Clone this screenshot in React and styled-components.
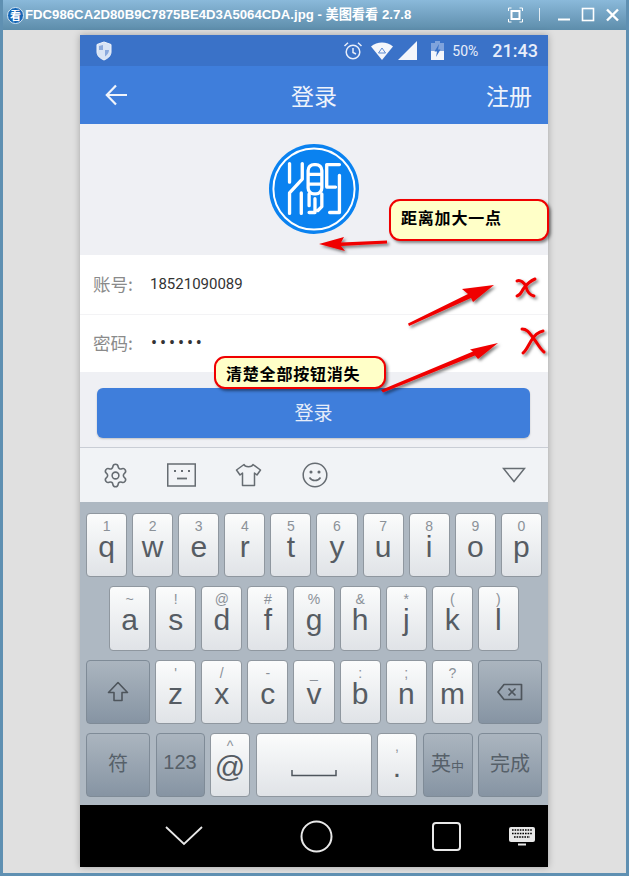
import React from 'react'
import styled, { createGlobalStyle } from 'styled-components'
import { Settings } from 'lucide-react'

const GlobalStyle = createGlobalStyle`
	html, body {
		margin: 0;
		padding: 0;
		background: #e0e0e0;
	}
	body {
		font-family: "Liberation Sans", "Noto Sans CJK SC", sans-serif;
	}
`

const Win = styled.div`
	position: relative;
	width: 629px;
	height: 876px;
	overflow: hidden;
	display: flex;
	flex-direction: column;
	box-sizing: border-box;
	border: solid #5f90b2;
	border-width: 0 3px 3px 3px;
	background: #e0e0e0;
`
const TitleBar = styled.div`
	height: 30px;
	margin: 0 -3px;
	padding: 0 0 0 7px;
	flex: none;
	display: flex;
	align-items: center;
	background: linear-gradient(#8ab9da, #5d8dab);
`
const AppIcon = styled.span`
	width: 17px;
	height: 17px;
	margin-right: 1px;
	border-radius: 50%;
	border: 1px solid #d5e6f2;
	box-sizing: border-box;
	background: #1565b5;
	color: #fff;
	font: 700 11px/15px "Noto Sans CJK SC", sans-serif;
	text-align: center;
`
const TitleText = styled.span`
	color: #fff;
	font: 700 13.2px/30px "Liberation Sans", "Noto Sans CJK SC", sans-serif;
	white-space: nowrap;
	flex: 1;
`
const WinButtons = styled.div`
	display: flex;
	align-items: center;
	width: 122px;
`
const Stage = styled.div`
	flex: 1;
	padding: 5px 78px 6px 77px;
	min-height: 0;
`
const Phone = styled.div`
	width: 468px;
	height: 832px;
	display: flex;
	flex-direction: column;
	box-shadow: 0 0 7px rgba(0, 0, 0, 0.28);
	background: #eff0f4;
`
const StatusBar = styled.div`
	height: 31px;
	flex: none;
	background: #3a72c8;
	display: flex;
	align-items: center;
	padding: 0 10px 0 15px;
	color: #e8eefa;
	font-family: Roboto, sans-serif;
`
const StatusIcons = styled.div`
	margin-left: auto;
	display: flex;
	align-items: center;
`
const StatusGap = styled.span`
	width: ${({$w}) => $w}px;
`
const Percent = styled.span`
	font-size: 14px;
	margin: 0 14px 0 8px;
`
const Clock = styled.span`
	font-size: 18px;
	font-weight: 500;
`
const AppBar = styled.div`
	height: 58px;
	flex: none;
	background: #3f7edb;
	display: flex;
	align-items: center;
	justify-content: space-between;
	padding: 0 16px 0 25px;
	color: #eef3fb;
	font: 400 23px "Noto Sans CJK SC", sans-serif;
`
const BarTitle = styled.span`
	margin-left: 13px;
`
const LogoArea = styled.div`
	height: 131px;
	flex: none;
	display: flex;
	justify-content: center;
	padding-top: 20px;
	box-sizing: border-box;
`
const Form = styled.div`
	flex: none;
	background: #fff;
`
const Row = styled.div`
	height: ${({$h}) => $h}px;
	display: flex;
	align-items: center;
	padding: 0 0 2px 13px;
	box-sizing: border-box;
	border-top: ${({$line}) => $line ? '1px solid #f3f3f5' : 'none'};
`
const Label = styled.span`
	width: 57px;
	color: #8a8a8a;
	font: 400 17.5px "Noto Sans CJK SC", sans-serif;
`
const Value = styled.span`
	color: #333;
	font: 400 15px Roboto, sans-serif;
`
const Dots = styled.span`
	color: #333;
	font: 400 18px Roboto, sans-serif;
	letter-spacing: 2.9px;
	margin-left: 1px;
`
const ButtonArea = styled.div`
	height: 76px;
	flex: none;
	padding: 16px 18px 0 17px;
	box-sizing: border-box;
	border-bottom: 1px solid #c9cdd5;
`
const Submit = styled.div`
	height: 50px;
	border-radius: 6px;
	background: #3f7edb;
	box-shadow: 0 1px 2px rgba(0, 0, 0, 0.2);
	color: #e6edf9;
	font: 400 19px/48px "Noto Sans CJK SC", sans-serif;
	text-align: center;
`
const ImeBar = styled.div`
	height: 54px;
	flex: none;
	background: #f1f3f6;
	display: flex;
	align-items: center;
	padding: 0 22px;
	color: #666c72;
`
const ImeSlot = styled.div`
	width: ${({$w}) => $w}px;
	display: flex;
	color: #666c72;
`
const ImeEnd = styled.div`
	margin-left: auto;
	display: flex;
`
const Keyboard = styled.div`
	height: 303px;
	flex: none;
	box-sizing: border-box;
	padding: 11px 6px 8px;
	background: #aeb8c2;
	display: flex;
	flex-direction: column;
	gap: 9px;
`
const KeyRow = styled.div`
	flex: 1;
	display: flex;
	gap: ${({$gap}) => $gap || 5}px;
	padding: 0 ${({$inset}) => $inset || 0}px;
`
const KeyBase = styled.div`
	flex: ${({$w}) => $w ? `0 0 ${$w}px` : '1'};
	box-sizing: border-box;
	border-radius: 4px;
	border: 1px solid ${({$dark}) => $dark ? '#7f8b97' : '#8f979f'};
	background: ${({$dark}) => $dark
		? 'linear-gradient(#abb5bf, #8694a3)'
		: 'linear-gradient(#fbfcfc, #e0e3e7)'};
	display: flex;
	flex-direction: column;
	align-items: center;
	color: #565c63;
	overflow: hidden;
`
const Hint = styled.span`
	margin-top: 6px;
	height: 12px;
	font-size: 14px;
	line-height: 12px;
	color: #8b9198;
`
const Letter = styled.span`
	font-size: 30px;
	line-height: 29px;
`
const FuncText = styled.span`
	margin: auto 0;
	padding-bottom: 4px;
	font-family: "Liberation Sans", "Noto Sans CJK SC", sans-serif;
	font-size: 20px;
	color: #566069;
`
const TinyText = styled.span`
	font-size: 13px;
`
const KeyIcon = styled.span`
	display: flex;
	margin: ${({$top}) => $top ? `${$top}px 0 0` : 'auto 0'};
`
const NavBar = styled.div`
	height: 62px;
	flex: none;
	background: #000;
	display: flex;
	align-items: center;
	padding: 0 13px 0 85px;
`
const NavSlot = styled.div`
	display: flex;
	margin-right: ${({$gap}) => $gap}px;
`
const Overlay = styled.svg`
	position: absolute;
	left: -3px;
	top: 0;
	width: 629px;
	height: 876px;
	pointer-events: none;
`
const Callout = styled.div`
	position: absolute;
	left: ${({$x}) => $x}px;
	top: ${({$y}) => $y}px;
	width: ${({$w}) => $w}px;
	height: ${({$h}) => $h}px;
	box-sizing: border-box;
	padding: ${({$pad}) => $pad};
	border: 2px solid #f00000;
	border-radius: 11px;
	background: #ffffc8;
	box-shadow: 2px 2px 3px rgba(0, 0, 0, 0.45);
	color: #000;
	font: 700 16px/20px "Noto Sans CJK SC", sans-serif;
	letter-spacing: 0.8px;
	white-space: nowrap;
`

const row1 = [['1','q'],['2','w'],['3','e'],['4','r'],['5','t'],['6','y'],['7','u'],['8','i'],['9','o'],['0','p']]
const row2 = [['~','a'],['!','s'],['@','d'],['#','f'],['%','g'],['&','h'],['*','j'],['(','k'],[')','l']]
const row3 = [["'",'z'],['/','x'],['-','c'],['_','v'],[':','b'],[';','n'],['?','m']]

const Key = ({hint, letter, w}) => (
	<KeyBase $w={w}>
		<Hint>{hint}</Hint>
		<Letter>{letter}</Letter>
	</KeyBase>
)

const WinIcons = () => (
	<svg width="122" height="30" fill="none" stroke="#fff">
		<path d="M1.500 11V8h3M12.500 8h3v3M15.500 19v3h-3M4.500 22h-3v-3" strokeWidth="1" />
		<rect x="4.500" y="11" width="8" height="8" strokeWidth="2" />
		<path d="M32.500 8v13" strokeWidth="1" opacity=".8" />
		<path d="M51 19.500h12" strokeWidth="2" />
		<rect x="75.500" y="8.500" width="11" height="12" strokeWidth="1.600" />
		<path d="M100 9.500l11 11M111 9.500l-11 11" strokeWidth="2.400" />
	</svg>
)

const Shield = () => (
	<svg width="18" height="20" viewBox="0 0 18 20">
		<path d="M9 1l7 2.500V11c0 4-3.500 6.500-7 8-3.500-1.500-7-4-7-8V3.500z" fill="#d8e4f5" stroke="#f0f4fb" strokeWidth="1" />
		<path d="M4 5l4-1v5H4zM10 9h4c0 3-2 5-4 6.500z" fill="#8aa9dc" />
	</svg>
)

const Alarm = () => (
	<svg width="20" height="20" viewBox="0 0 20 20" fill="none" stroke="#e8eefa" strokeWidth="1.500">
		<circle cx="10" cy="11" r="6.800" />
		<path d="M10 7v4.500l3 1.500M1.500 5L5 1.800M18.500 5L15 1.800" />
	</svg>
)

const Wifi = () => (
	<svg width="22" height="18" viewBox="0 0 22 18">
		<path d="M0 4.500C6 -1 16 -1 22 4.500L11 18z" fill="#f4f6fb" />
		<path d="M11 6l3.500 5h-7z" fill="none" stroke="#5b8ad2" strokeWidth="1" />
	</svg>
)

const Signal = () => (
	<svg width="19" height="19" viewBox="0 0 19 19">
		<path d="M19 0v19H0z" fill="#f4f6fb" />
	</svg>
)

const Battery = () => (
	<svg width="13" height="19" viewBox="0 0 13 19">
		<path d="M4 0h5v2h4v17H0V2h4z" fill="#7fa3dc" />
		<path d="M0 10h13v9H0z" fill="#f4f6fb" />
		<path d="M8 3L3.500 10.500h2.500L5 16l4.500-7.500H7z" fill="#3a72c8" />
	</svg>
)

const BackArrow = () => (
	<svg width="24" height="24" viewBox="0 0 24 24" fill="none" stroke="#f0f4fb" strokeWidth="2.200">
		<path d="M22 12H2M11 2.500L1.800 12l9.200 9.500" />
	</svg>
)

const Logo = () => (
	<svg width="90" height="90" viewBox="0 0 92 92" fill="none">
		<circle cx="46" cy="46" r="46" fill="#0a82f0" />
		<circle cx="46" cy="46" r="41.500" stroke="#fff" strokeWidth="2" />
		<g stroke="#fff" strokeWidth="3.400" strokeLinecap="round" strokeLinejoin="round">
			<path d="M21 20v19M34 20v16L21 50v21M33 50v21" />
			<rect x="40" y="21" width="14" height="30" rx="6" />
			<path d="M41 31h12M41 41h12M41 51v12M47 56v14h-6M54 51v13l-4 4" />
			<path d="M72 21H59v23h9M72 32v38H62" />
		</g>
	</svg>
)

const KeyFace = () => (
	<svg width="29" height="24" viewBox="0 0 29 24" fill="none" stroke="#666c72">
		<rect x=".75" y="1" width="27.500" height="22" strokeWidth="1.500" />
		<path d="M7 8h2M14 8h2M21 8h2" strokeWidth="2" />
		<path d="M10 15.500h10" strokeWidth="1.800" />
	</svg>
)

const ShirtIcon = () => (
	<svg width="27" height="24" viewBox="0 0 27 24" fill="none" stroke="#666c72" strokeWidth="1.500" strokeLinejoin="round">
		<path d="M9 1.500c1 3 8 3 9 0l7.500 5.500-3.500 5-2.500-2v12.500h-12V10l-2.500 2-3.500-5z" />
	</svg>
)

const Smiley = () => (
	<svg width="26" height="26" viewBox="0 0 26 26" fill="none" stroke="#666c72" strokeWidth="1.500">
		<circle cx="13" cy="13" r="11.800" />
		<path d="M7.500 15.500c2.500 4 8.500 4 11 0" />
		<circle cx="9" cy="10" r=".8" fill="#666c72" />
		<circle cx="17" cy="10" r=".8" fill="#666c72" />
	</svg>
)

const FoldTriangle = () => (
	<svg width="24" height="16" viewBox="0 0 24 16" fill="none" stroke="#666c72" strokeWidth="1.500">
		<path d="M1.500 1.500h21L12 14.500z" />
	</svg>
)

const ShiftIcon = () => (
	<svg width="22" height="22" viewBox="0 0 22 22" fill="none" stroke="#4e555c" strokeWidth="1.600" strokeLinejoin="round">
		<path d="M11 1.500L1.500 11.500h5.500v8h8v-8h5.500z" />
	</svg>
)

const DeleteIcon = () => (
	<svg width="26" height="18" viewBox="0 0 26 18" fill="none" stroke="#4e555c" strokeWidth="1.700" strokeLinejoin="round">
		<path d="M7 1.500h17.500v15H7L1 9z" />
		<path d="M11.500 5.500l7 7M18.500 5.500l-7 7" />
	</svg>
)

const SpaceIcon = () => (
	<svg width="46" height="7" viewBox="0 0 46 7" fill="none" stroke="#4e555c" strokeWidth="1.500">
		<path d="M1 0v5.500h44V0" />
	</svg>
)

const KeyboardIcon = () => (
	<svg width="26" height="19" viewBox="0 0 26 19">
		<rect width="26" height="15" rx="2" fill="#e8e8e8" />
		<path d="M3 3h20M3 6.500h20M5 10h16" stroke="#000" strokeWidth="1.600" strokeDasharray="1.600 1" />
		<rect x="9" y="16.500" width="8" height="2" fill="#e8e8e8" />
	</svg>
)

const Marks = () => (
	<Overlay viewBox="0 0 629 876">
		<defs>
			<filter id="soft" x="-20%" y="-40%" width="150%" height="200%">
				<feDropShadow dx="2" dy="2" stdDeviation="1.500" floodColor="#000" floodOpacity=".5" />
			</filter>
		</defs>
		<g fill="#f00000" filter="url(#soft)">
			<path d="M387 240.500v3L341 246l4 5-26-7 25-7-3 5.500z" />
			<path d="M408 323.500L468 294l-6-5 32-4-21 17-2-4-62 28z" />
			<path d="M381 390l92-38.500-3-2 28-6.500-20 16-3-3.500-92 37z" />
		</g>
		<g fill="none" stroke="#f00000" strokeWidth="3" strokeLinecap="round" filter="url(#soft)">
			<path d="M517 281c3-2 8 2 9 6s4 8 8 9" />
			<path d="M535 279c-5 2-8 5-11 9s-3 7-7 8" />
			<path d="M522 329c6 0 8 5 12 10s6 10 10 13" />
			<path d="M543 331c-6 1-9 5-12 10s-5 10-8 12" />
		</g>
	</Overlay>
)

const App = () => {
	return (
		<Win>
			<GlobalStyle />
			<TitleBar>
				<AppIcon>看</AppIcon>
				<TitleText>FDC986CA2D80B9C7875BE4D3A5064CDA.jpg - 美图看看 2.7.8</TitleText>
				<WinButtons><WinIcons /></WinButtons>
			</TitleBar>
			<Stage>
				<Phone>
					<StatusBar>
						<Shield />
						<StatusIcons>
							<Alarm />
							<StatusGap $w={8} />
							<Wifi />
							<StatusGap $w={5} />
							<Signal />
							<StatusGap $w={14} />
							<Battery />
							<Percent>50%</Percent>
							<Clock>21:43</Clock>
						</StatusIcons>
					</StatusBar>
					<AppBar>
						<BackArrow />
						<BarTitle>登录</BarTitle>
						<span>注册</span>
					</AppBar>
					<LogoArea><Logo /></LogoArea>
					<Form>
						<Row $h={59}>
							<Label>账号:</Label>
							<Value>18521090089</Value>
						</Row>
						<Row $h={58} $line>
							<Label>密码:</Label>
							<Dots>••••••</Dots>
						</Row>
					</Form>
					<ButtonArea><Submit>登录</Submit></ButtonArea>
					<ImeBar>
						<ImeSlot $w={65}><Settings size={27} strokeWidth={1.4} /></ImeSlot>
						<ImeSlot $w={68}><KeyFace /></ImeSlot>
						<ImeSlot $w={67}><ShirtIcon /></ImeSlot>
						<ImeSlot $w={30}><Smiley /></ImeSlot>
						<ImeEnd><FoldTriangle /></ImeEnd>
					</ImeBar>
					<Keyboard>
						<KeyRow>
							{row1.map(([hint, letter]) => <Key key={letter} hint={hint} letter={letter} />)}
						</KeyRow>
						<KeyRow $inset={23}>
							{row2.map(([hint, letter]) => <Key key={letter} hint={hint} letter={letter} />)}
						</KeyRow>
						<KeyRow>
							<KeyBase $dark $w={64}><KeyIcon><ShiftIcon /></KeyIcon></KeyBase>
							{row3.map(([hint, letter]) => <Key key={letter} hint={hint} letter={letter} />)}
							<KeyBase $dark $w={64}><KeyIcon><DeleteIcon /></KeyIcon></KeyBase>
						</KeyRow>
						<KeyRow $gap={5.5}>
							<KeyBase $dark $w={64}><FuncText>符</FuncText></KeyBase>
							<KeyBase $dark $w={49}><FuncText>123</FuncText></KeyBase>
							<Key w={40} hint="^" letter="@" />
							<KeyBase $w={116}><KeyIcon $top={36}><SpaceIcon /></KeyIcon></KeyBase>
							<Key w={40} hint="," letter="." />
							<KeyBase $dark $w={50}><FuncText>英<TinyText>中</TinyText></FuncText></KeyBase>
							<KeyBase $dark $w={64}><FuncText>完成</FuncText></KeyBase>
						</KeyRow>
					</Keyboard>
					<NavBar>
						<NavSlot $gap={97}>
							<svg width="38" height="20" fill="none" stroke="#e8e8e8" strokeWidth="1.800"><path d="M1 1l18 17L37 1" /></svg>
						</NavSlot>
						<NavSlot $gap={99}>
							<svg width="33" height="33" fill="none" stroke="#e8e8e8" strokeWidth="2"><circle cx="16.500" cy="16.500" r="15" /></svg>
						</NavSlot>
						<NavSlot $gap={48}>
							<svg width="29" height="29" fill="none" stroke="#e8e8e8" strokeWidth="2"><rect x="1" y="1" width="27" height="27" rx="3" /></svg>
						</NavSlot>
						<KeyboardIcon />
					</NavBar>
				</Phone>
			</Stage>
			<Marks />
			<Callout $x={386} $y={199} $w={160} $h={42} $pad="6px 0 0 10px">距离加大一点</Callout>
			<Callout $x={211} $y={356} $w={172} $h={33} $pad="5px 0 0 10px">清楚全部按钮消失</Callout>
		</Win>
	)
}

export default App
